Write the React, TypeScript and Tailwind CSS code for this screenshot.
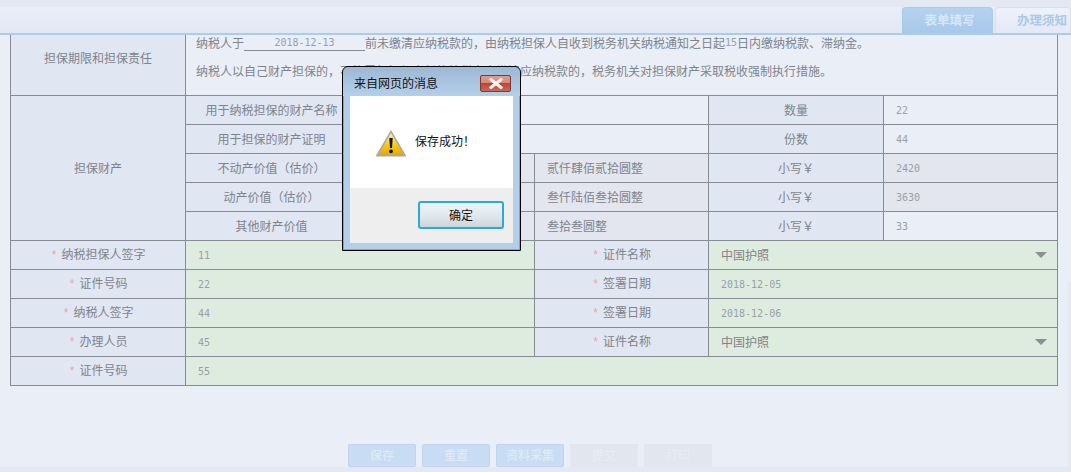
import React from "react";

const Label = ({ children, star = false, ...rest }: any) => (
  <td {...rest} className="border border-[#868b94] bg-[#e0e6f2] p-0 text-center text-[#7f848c]">
    {star && <span className="mr-[4px] text-[#f2a0b0] font-['Liberation_Mono',monospace] text-[12px]">*</span>}
    {children}
  </td>
);

const Num = ({ children }: any) => (
  <span className="font-['DejaVu_Sans_Mono',monospace] text-[10px] text-[#9a9fa9]">{children}</span>
);

const Val = ({ children, tone = "light", colSpan }: any) => {
  const bg = tone === "green" ? "bg-[#deebdf]" : tone === "dark" ? "bg-[#e3e6ee]" : "bg-[#e9eef7]";
  return (
    <td colSpan={colSpan} className={`border border-[#868b94] ${bg} p-0 pl-[12px] text-[#7f848c]`}>
      {children}
    </td>
  );
};

const Select = () => (
  <td colSpan={2} className="border border-[#868b94] bg-[#deebdf] p-0 pr-[10px] pl-[12px] text-[#7f848c]">
    <div className="flex items-center justify-between">
      <span>中国护照</span>
      <svg width="12" height="6" viewBox="0 0 12 6" className="block">
        <path d="M0 0H12L6 6Z" fill="#8a8f98" />
      </svg>
    </div>
  </td>
);

const Big = ({ children }: any) => (
  <td className="border border-[#868b94] bg-[#e3e6ee] p-0 pl-[12px] text-[#7f848c]">{children}</td>
);

const FootBtn = ({ children, off = false }: any) => (
  <div
    className={
      off
        ? "flex h-[23px] w-[68px] items-center justify-center bg-[#e2e6ef] text-[12px] text-[#e9edf6]"
        : "flex h-[23px] w-[68px] items-center justify-center rounded-[2px] border border-[#bfd5ee] bg-[#c8ddf3] text-[12px] text-[#e2ecf8]"
    }
  >
    {children}
  </div>
);

export default function App() {
  const rowH = "h-[29px]";
  return (
    <div className="relative flex h-[472px] w-[1071px] flex-col overflow-hidden bg-[#e9eef7] font-['Noto_Sans_CJK_SC',sans-serif] text-[12px] leading-none">
      <div className="h-[7px] shrink-0 bg-[#e3e8f3]" />
      <div className="flex h-[26px] shrink-0 items-end justify-end bg-gradient-to-b from-[#e9eef9] to-[#e2e8f3]">
        <div className="flex h-[26px] w-[91px] items-center justify-center rounded-t-[4px] border border-b-0 border-[#a9cbeb] bg-gradient-to-b from-[#b5d3f0] to-[#a7c8ea] pl-[4px] text-[12.5px] font-bold text-[#d8e8f7]">
          表单填写
        </div>
        <div className="ml-[2px] flex h-[26px] w-[76px] items-center justify-start overflow-hidden rounded-t-[4px] border border-b-0 border-[#d5dfee] bg-gradient-to-b from-[#edf1fa] to-[#e3e9f5] pl-[21px] text-[12.5px] font-bold whitespace-nowrap text-[#adc9e9]">
          办理须知
        </div>
      </div>
      <div className="h-[2px] shrink-0 bg-[#acccec]" />

      <div className="flex min-h-0 flex-1">
        <div className="min-w-0 flex-1 pl-[10px]">
          <table className="w-[1047px] table-fixed border-collapse">
            <colgroup>
              <col className="w-[175px]" />
              <col className="w-[172px]" />
              <col className="w-[177px]" />
              <col className="w-[174px]" />
              <col className="w-[175px]" />
              <col className="w-[174px]" />
            </colgroup>
            <tbody>
              <tr className="h-[60px]">
                <td className="border border-t-0 border-[#868b94] bg-[#e0e6f2] p-0 pb-[14px] text-center text-[#7f848c]">
                  担保期限和担保责任
                </td>
                <td colSpan={5} className="border border-t-0 border-[#868b94] bg-[#e9eef7] p-0 pl-[10px] align-top text-[#7f848c]">
                  <div className="flex h-[16px] items-center whitespace-nowrap">
                    纳税人于
                    <span className="flex h-[16px] w-[121px] items-center justify-center border-b border-[#868b94]">
                      <Num>2018-12-13</Num>
                    </span>
                    前未缴清应纳税款的，由纳税担保人自收到税务机关纳税通知之日起
                    <Num>15</Num>
                    日内缴纳税款、滞纳金。
                  </div>
                  <div className="mt-[14px] whitespace-nowrap">
                    纳税人以自己财产担保的，不能履行担保责任的纳税人未缴清应纳税款的，税务机关对担保财产采取税收强制执行措施。
                  </div>
                </td>
              </tr>
              <tr className={rowH}>
                <Label rowSpan={5}>担保财产</Label>
                <Label>用于纳税担保的财产名称</Label>
                <Val colSpan={2} />
                <Label>数量</Label>
                <Val><Num>22</Num></Val>
              </tr>
              <tr className={rowH}>
                <Label>用于担保的财产证明</Label>
                <Val colSpan={2} />
                <Label>份数</Label>
                <Val><Num>44</Num></Val>
              </tr>
              <tr className={rowH}>
                <Label>不动产价值（估价）</Label>
                <Val tone="dark" />
                <Big>贰仟肆佰贰拾圆整</Big>
                <Label>小写￥</Label>
                <Val tone="dark"><Num>2420</Num></Val>
              </tr>
              <tr className={rowH}>
                <Label>动产价值（估价）</Label>
                <Val tone="dark" />
                <Big>叁仟陆佰叁拾圆整</Big>
                <Label>小写￥</Label>
                <Val tone="dark"><Num>3630</Num></Val>
              </tr>
              <tr className={rowH}>
                <Label>其他财产价值</Label>
                <Val tone="dark" />
                <Big>叁拾叁圆整</Big>
                <Label>小写￥</Label>
                <Val><Num>33</Num></Val>
              </tr>
              <tr className={rowH}>
                <Label star>纳税担保人签字</Label>
                <Val tone="green" colSpan={2}><Num>11</Num></Val>
                <Label star>证件名称</Label>
                <Select />
              </tr>
              <tr className={rowH}>
                <Label star>证件号码</Label>
                <Val tone="green" colSpan={2}><Num>22</Num></Val>
                <Label star>签署日期</Label>
                <Val tone="green" colSpan={2}><Num>2018-12-05</Num></Val>
              </tr>
              <tr className={rowH}>
                <Label star>纳税人签字</Label>
                <Val tone="green" colSpan={2}><Num>44</Num></Val>
                <Label star>签署日期</Label>
                <Val tone="green" colSpan={2}><Num>2018-12-06</Num></Val>
              </tr>
              <tr className={rowH}>
                <Label star>办理人员</Label>
                <Val tone="green" colSpan={2}><Num>45</Num></Val>
                <Label star>证件名称</Label>
                <Select />
              </tr>
              <tr className={rowH}>
                <Label star>证件号码</Label>
                <Val tone="green" colSpan={5}><Num>55</Num></Val>
              </tr>
            </tbody>
          </table>
          <div className="mt-[58px] flex gap-[6px] pl-[338px]">
            <FootBtn>保存</FootBtn>
            <FootBtn>重置</FootBtn>
            <FootBtn>资料采集</FootBtn>
            <FootBtn off>提交</FootBtn>
            <FootBtn off>打印</FootBtn>
          </div>
        </div>
        <div className="w-[3px] shrink-0 pt-[247px]">
          <div className="h-full w-full bg-[#e3e8f3]" />
        </div>
      </div>
      <div className="h-[5px] shrink-0 bg-[#e3e8f3]" />

      {/* Message dialog */}
      <div className="absolute top-[66px] left-[342px] flex h-[185px] w-[179px] flex-col rounded-t-[6px] border border-black bg-[#b4cfe9] px-[7px] pb-[7px] shadow-[inset_0_0_0_1px_#3cc0e8]">
        <div className="-mx-[7px] flex h-[29px] shrink-0 items-center justify-between rounded-t-[6px] bg-gradient-to-b from-[#9db8d5] to-[#b4cfe9] pt-[3px] pr-[9px] pl-[11px]">
          <span className="text-[12px] text-[#111]">来自网页的消息</span>
          <div className="flex h-[17px] w-[31px] items-center justify-center rounded-[2px] border border-[#7a3a38] bg-[linear-gradient(#e09a8c_0%,#d9897a_45%,#bb4630_50%,#c86a58_100%)]">
            <svg width="16" height="11" viewBox="0 0 16 11">
              <path d="M3 1.5L13 9.5M13 1.5L3 9.5" stroke="#f4f4f4" strokeWidth="3" strokeLinecap="square" />
            </svg>
          </div>
        </div>
        <div className="flex h-[92px] shrink-0 items-start bg-white pt-[33px] pl-[25px]">
          <svg width="32" height="28" viewBox="0 0 32 28" className="block">
            <defs>
              <linearGradient id="warn" x1="0" y1="0" x2="0" y2="1">
                <stop offset="0" stopColor="#fff3a0" />
                <stop offset="0.55" stopColor="#f8cc10" />
                <stop offset="1" stopColor="#e8a800" />
              </linearGradient>
            </defs>
            <path d="M16 1L31 26.5Q31.5 27.5 30 27.5H2Q0.5 27.5 1 26.5Z" fill="#a8a8a8" />
            <path d="M16 4L28.5 25.5H3.5Z" fill="url(#warn)" />
            <path d="M14.3 9H17.7L17 19H15Z" fill="#111" />
            <circle cx="16" cy="22.3" r="1.9" fill="#111" />
          </svg>
          <span className="mt-[6px] ml-[8px] text-[12px] text-[#111]">保存成功！</span>
        </div>
        <div className="flex flex-1 items-start justify-end bg-[#eeeeee] pt-[13px] pr-[9px]">
          <div className="flex h-[28px] w-[86px] items-center justify-center rounded-[3px] border-2 border-[#29a9dc] bg-gradient-to-b from-[#eef4f7] via-[#e2e9ee] to-[#ccd5da] text-[12px] text-[#111]">
            确定
          </div>
        </div>
      </div>
    </div>
  );
}
